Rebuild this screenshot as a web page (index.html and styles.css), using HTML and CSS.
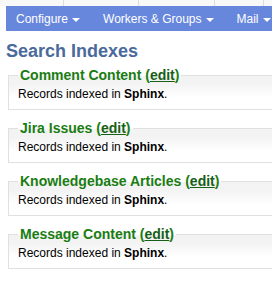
FILE: index.html
```html
<!DOCTYPE html>
<html lang="en">

<head>
  <meta charset="UTF-8">
  <meta name="viewport" content="width=device-width, initial-scale=1.0">
  <title>Search Indexes</title>
  <link rel="stylesheet" href="styles.css">
</head>

<body>
  <div class="tabs">
    <div class="tab t1"></div>
    <div class="tab t2"></div>
    <div class="tab t3"></div>
    <div class="tab t4"></div>
  </div>
  <div class="menu">
    <div class="item">Configure <span class="caret"></span></div>
    <div class="item">Workers &amp; Groups <span class="caret"></span></div>
    <div class="item">Mail <span class="caret"></span></div>
  </div>
  <div class="content">
    <h1>Search Indexes</h1>
    <fieldset>
      <legend>Comment Content (<a href="#">edit</a>)</legend>
      <div>Records indexed in <b>Sphinx</b>.</div>
    </fieldset>
    <fieldset>
      <legend>Jira Issues (<a href="#">edit</a>)</legend>
      <div>Records indexed in <b>Sphinx</b>.</div>
    </fieldset>
    <fieldset>
      <legend>Knowledgebase Articles (<a href="#">edit</a>)</legend>
      <div>Records indexed in <b>Sphinx</b>.</div>
    </fieldset>
    <fieldset>
      <legend>Message Content (<a href="#">edit</a>)</legend>
      <div>Records indexed in <b>Sphinx</b>.</div>
    </fieldset>
  </div>
</body>

</html>
```

FILE: styles.css
```css
* {
  box-sizing: border-box;
}

body {
  margin: 0;
  font-family: "Liberation Sans", Arial, sans-serif;
  font-size: 12px;
  color: #000;
  background-color: #fff;
}

.tabs {
  display: flex;
  height: 6px;
  background-color: #f8f8f8;
}

.tab {
  height: 6px;
  border-right: 1px solid #dcdcdc;
}

.t1 {
  width: 64px;
}

.t2 {
  width: 75px;
}

.t3 {
  width: 76px;
}

.t4 {
  width: 49px;
}

.menu {
  display: flex;
  height: 25px;
  margin-left: 6px;
  padding-left: 10px;
  align-items: center;
  gap: 23px;
  overflow: hidden;
  background-color: #6787dd;
  color: #fff;
  font-size: 12px;
}

.item {
  display: flex;
  flex-shrink: 0;
  align-items: center;
  white-space: nowrap;
}

.caret {
  display: inline-block;
  width: 0;
  height: 0;
  margin-left: 4px;
  margin-top: 2px;
  border-left: 4px solid transparent;
  border-right: 4px solid transparent;
  border-top: 4px solid #fff;
}

.content {
  padding-left: 6px;
}

h1 {
  margin: 9px 0 5px;
  font-size: 18px;
  line-height: 22px;
  color: #4a6a9b;
}

fieldset {
  margin: 0 0 10px 2px;
  padding: 4px 9px 8px;
  border: 1px solid #e0e0e0;
  border-right: none;
  background: linear-gradient(#f3f3f3, #f3f3f3 8px, #fff 22px);
  line-height: 14px;
}

legend {
  padding: 0 2px;
  font-size: 14px;
  line-height: 16px;
  font-weight: bold;
  color: #1a7d12;
}

legend a {
  color: #165f16;
}
```
